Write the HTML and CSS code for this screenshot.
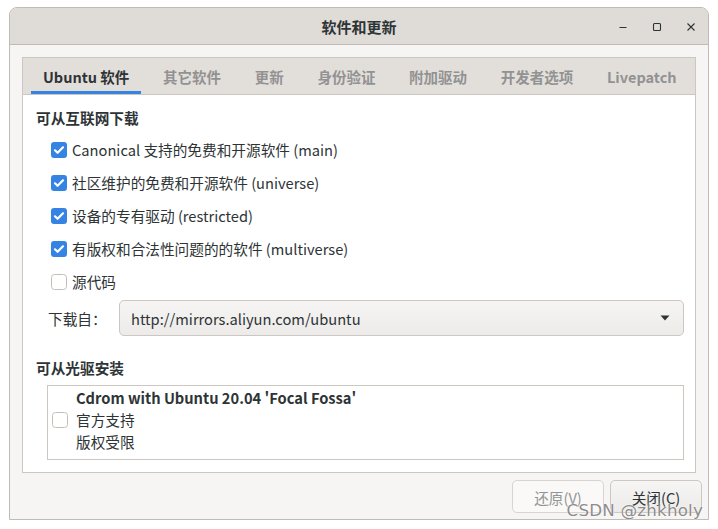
FILE: index.html
```html
<!DOCTYPE html>
<html lang="zh-CN">
<head>
<meta charset="utf-8">
<title>软件和更新</title>
<link rel="stylesheet" href="styles.css">
</head>
<body>
<div class="window">
  <header class="titlebar">
    <div class="spacer"></div>
    <div class="title">软件和更新</div>
    <div class="controls">
      <span class="ctl"><svg width="10" height="10" viewBox="0 0 10 10"><path d="M1.5 5.5h7" stroke="#2e3436" stroke-width="1.1"/></svg></span>
      <span class="ctl"><svg width="10" height="10" viewBox="0 0 10 10"><rect x="1.5" y="1.5" width="7" height="7" rx="1" fill="none" stroke="#2e3436" stroke-width="1.1"/></svg></span>
      <span class="ctl"><svg width="10" height="10" viewBox="0 0 10 10"><path d="M1.5 1.5l7 7M8.5 1.5l-7 7" stroke="#2e3436" stroke-width="1.1"/></svg></span>
    </div>
  </header>
  <div class="body">
    <div class="notebook">
      <nav class="tabs">
        <div class="tab active">Ubuntu 软件</div>
        <div class="tab">其它软件</div>
        <div class="tab">更新</div>
        <div class="tab">身份验证</div>
        <div class="tab">附加驱动</div>
        <div class="tab">开发者选项</div>
        <div class="tab">Livepatch</div>
      </nav>
      <div class="page">
        <div class="section-title">可从互联网下载</div>
        <div class="checks">
          <div class="check"><svg class="cb" width="16" height="16" viewBox="0 0 16 16"><rect x="0" y="0" width="16" height="16" rx="3" fill="#3584e4"/><path d="M4 8.3l2.6 2.5L12 5.3" fill="none" stroke="#fff" stroke-width="2.2" stroke-linecap="round" stroke-linejoin="round"/></svg><span>Canonical 支持的免费和开源软件 (main)</span></div>
          <div class="check"><svg class="cb" width="16" height="16" viewBox="0 0 16 16"><rect x="0" y="0" width="16" height="16" rx="3" fill="#3584e4"/><path d="M4 8.3l2.6 2.5L12 5.3" fill="none" stroke="#fff" stroke-width="2.2" stroke-linecap="round" stroke-linejoin="round"/></svg><span>社区维护的免费和开源软件 (universe)</span></div>
          <div class="check"><svg class="cb" width="16" height="16" viewBox="0 0 16 16"><rect x="0" y="0" width="16" height="16" rx="3" fill="#3584e4"/><path d="M4 8.3l2.6 2.5L12 5.3" fill="none" stroke="#fff" stroke-width="2.2" stroke-linecap="round" stroke-linejoin="round"/></svg><span>设备的专有驱动 (restricted)</span></div>
          <div class="check"><svg class="cb" width="16" height="16" viewBox="0 0 16 16"><rect x="0" y="0" width="16" height="16" rx="3" fill="#3584e4"/><path d="M4 8.3l2.6 2.5L12 5.3" fill="none" stroke="#fff" stroke-width="2.2" stroke-linecap="round" stroke-linejoin="round"/></svg><span>有版权和合法性问题的的软件 (multiverse)</span></div>
          <div class="check"><svg class="cb" width="16" height="16" viewBox="0 0 16 16"><rect x="0.5" y="0.5" width="15" height="15" rx="3" fill="#fff" stroke="#c3beb8"/></svg><span>源代码</span></div>
        </div>
        <div class="source-row">
          <span class="source-label">下载自：</span>
          <div class="combo">
            <span>http://mirrors.aliyun.com/ubuntu</span>
            <svg width="10" height="6" viewBox="0 0 10 6"><path d="M0.5 0.5h9L5 5.5z" fill="#2e3436"/></svg>
          </div>
        </div>
        <div class="section-title second">可从光驱安装</div>
        <div class="cdrom">
          <svg class="cb" width="16" height="16" viewBox="0 0 16 16"><rect x="0.5" y="0.5" width="15" height="15" rx="3" fill="#fff" stroke="#c3beb8"/></svg>
          <div class="cdrom-text">
            <div class="bold">Cdrom with Ubuntu 20.04 'Focal Fossa'</div>
            <div>官方支持</div>
            <div>版权受限</div>
          </div>
        </div>
      </div>
    </div>
    <div class="actions">
      <button class="btn disabled">还原(V)</button>
      <button class="btn">关闭(C)</button>
    </div>
  </div>
</div>
<div class="watermark">CSDN @zhkholy</div>
</body>
</html>
```

FILE: styles.css
```css
* { box-sizing: border-box; }

html, body {
  margin: 0;
  padding: 0;
  background: #ffffff;
}

body {
  font-family: "Noto Sans CJK SC", "Noto Sans", sans-serif;
  font-size: 14.67px;
  color: #2e3436;
  width: 718px;
  height: 529px;
  overflow: hidden;
  position: relative;
}

.window {
  margin: 7px 0 0 9px;
  width: 700px;
  height: 513px;
  border: 1px solid #c0bbb5;
  border-radius: 8px 8px 0 0;
  background: #f6f5f4;
  display: flex;
  flex-direction: column;
  overflow: hidden;
}

.titlebar {
  height: 37px;
  flex: none;
  background: #dfdbd7;
  border-bottom: 1px solid #c0bbb5;
  display: grid;
  grid-template-columns: 1fr auto 1fr;
  align-items: center;
  padding-top: 1px;
}

.title {
  font-weight: 700;
  font-size: 15px;
  line-height: 20px;
  color: #2e3436;
}

.controls {
  display: flex;
  justify-content: flex-end;
  align-self: stretch;
}

.ctl {
  width: 34px;
  display: flex;
  align-items: center;
  justify-content: center;
}

.body {
  flex: 1;
  display: flex;
  flex-direction: column;
  padding: 12px 12px 0;
}

.notebook {
  height: 416px;
  flex: none;
  border: 1px solid #cdc7c2;
  background: #ffffff;
  display: flex;
  flex-direction: column;
}

.tabs {
  height: 37px;
  flex: none;
  display: flex;
  gap: 9.7px;
  padding-left: 8px;
  background: #e2dfdb;
  border-bottom: 1px solid #cdc7c2;
}

.tab {
  padding: 0 12px;
  display: flex;
  align-items: center;
  font-weight: 700;
  font-size: 14.5px;
  color: #929292;
  white-space: nowrap;
}

.tab.active {
  color: #2e3436;
  box-shadow: inset 0 -3px 0 #3584e4;
}

.page {
  flex: 1;
  padding: 13px 11px 0 13px;
}

.section-title {
  font-weight: 700;
  line-height: 20px;
  height: 20px;
}

.section-title.second {
  margin-top: 22px;
}

.checks {
  margin-top: 5px;
  padding-left: 15px;
}

.check {
  height: 33px;
  display: flex;
  align-items: center;
  gap: 5px;
  white-space: nowrap;
}

.cb { flex: none; display: block; }

.source-row {
  margin-top: 2px;
  display: flex;
  align-items: center;
  padding-left: 12px;
}

.source-label {
  width: 71px;
  flex: none;
}

.combo {
  flex: 1;
  height: 36px;
  border: 1px solid #cdc7c2;
  border-radius: 5px;
  background: linear-gradient(#f6f5f4, #edebe9);
  display: flex;
  align-items: center;
  justify-content: space-between;
  padding: 0 13px 0 11px;
}

.cdrom {
  margin: 7px 0 0 11px;
  height: 75px;
  border: 1px solid #cdc7c2;
  display: flex;
  align-items: center;
  padding: 0 0 6px 4px;
  gap: 8px;
}

.cdrom-text { line-height: 22px; }

.cdrom-text .bold { font-weight: 700; }

.actions {
  display: flex;
  justify-content: flex-end;
  gap: 6px;
  padding: 7px 0 0;
  margin-right: -6px;
}

.btn {
  width: 92px;
  height: 33px;
  font: inherit;
  font-size: 14.67px;
  color: #2e3436;
  border: 1px solid #cdc7c2;
  border-radius: 5px;
  background: linear-gradient(#f6f5f4, #edebe9);
  padding: 1px 0 0;
}

.btn.disabled {
  color: #929595;
  background: #faf9f8;
  border-color: #d8d4d0;
}

.watermark {
  position: absolute;
  right: 15px;
  bottom: 9px;
  font-family: "DejaVu Sans", sans-serif;
  font-size: 16.7px;
  color: rgba(120, 120, 120, 0.85);
  text-shadow: 0 0 2px #fff;
  letter-spacing: 0.2px;
}
```
